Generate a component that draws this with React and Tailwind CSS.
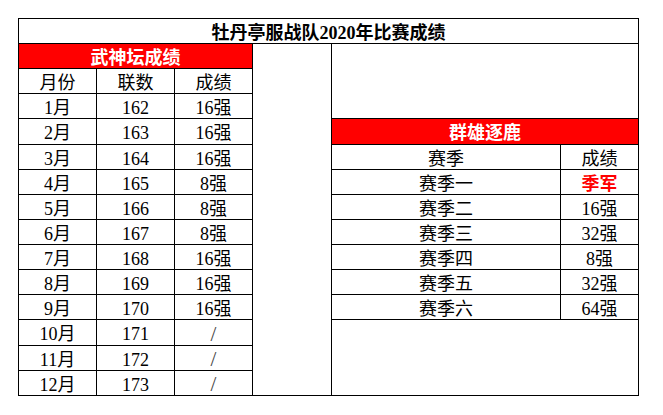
const leftRows = [
  ['1月', '162', '16强'],
  ['2月', '163', '16强'],
  ['3月', '164', '16强'],
  ['4月', '165', '8强'],
  ['5月', '166', '8强'],
  ['6月', '167', '8强'],
  ['7月', '168', '16强'],
  ['8月', '169', '16强'],
  ['9月', '170', '16强'],
  ['10月', '171', '/'],
  ['11月', '172', '/'],
  ['12月', '173', '/'],
];

const seasons = [
  ['赛季一', '季军', true],
  ['赛季二', '16强'],
  ['赛季三', '32强'],
  ['赛季四', '8强'],
  ['赛季五', '32强'],
  ['赛季六', '64强'],
];

const seasonRows = ['row-start-7', 'row-start-8', 'row-start-9', 'row-start-10', 'row-start-11', 'row-start-12'];

const Cell = ({ className = '', children }) => (
  <div className={`bg-white flex items-center justify-center leading-none pt-[3px] ${className}`}>
    {children}
  </div>
);

export default function App() {
  return (
    <div
      className="w-[663px] h-[415px] bg-white pt-[18px] pl-[18px] text-[18px] text-black"
      style={{ fontFamily: '"Liberation Serif", "Noto Sans CJK SC", serif' }}
    >
      <div className="inline-grid bg-black p-px gap-px grid-cols-[77px_77px_77px_78px_228px_77px] grid-rows-[24px_24px_24px_24px_25px_24px_24px_24px_24px_24px_24px_24px_25px_24px_24px]">
        {/* title */}
        <Cell className="col-span-6 font-bold">牡丹亭服战队2020年比赛成绩</Cell>

        {/* left table */}
        <Cell className="col-start-1 col-span-3 row-start-2 !bg-[#ff0000] text-white font-bold">武神坛成绩</Cell>
        <Cell className="col-start-1 row-start-3">月份</Cell>
        <Cell className="col-start-2 row-start-3">联数</Cell>
        <Cell className="col-start-3 row-start-3">成绩</Cell>
        {leftRows.map((r, i) =>
          r.map((v, j) => (
            <Cell key={`${i}-${j}`} className={v === '/' ? 'text-[#444] text-[21px]' : ''}>
              {v}
            </Cell>
          ))
        )}

        {/* spacer column */}
        <div className="bg-white col-start-4 row-start-2 row-span-14" />

        {/* right table */}
        <div className="bg-white col-start-5 col-span-2 row-start-2 row-span-3" />
        <Cell className="col-start-5 col-span-2 row-start-5 !bg-[#ff0000] text-white font-bold">群雄逐鹿</Cell>
        <Cell className="col-start-5 row-start-6">赛季</Cell>
        <Cell className="col-start-6 row-start-6">成绩</Cell>
        {seasons.map(([s, r, hot], i) => (
          <div key={s} className="contents">
            <Cell className={`col-start-5 ${seasonRows[i]}`}>{s}</Cell>
            <Cell className={`col-start-6 ${seasonRows[i]} ${hot ? 'text-[#ff0000] font-bold' : ''}`}>{r}</Cell>
          </div>
        ))}
        <div className="bg-white col-start-5 col-span-2 row-start-13 row-span-3" />
      </div>
    </div>
  );
}
